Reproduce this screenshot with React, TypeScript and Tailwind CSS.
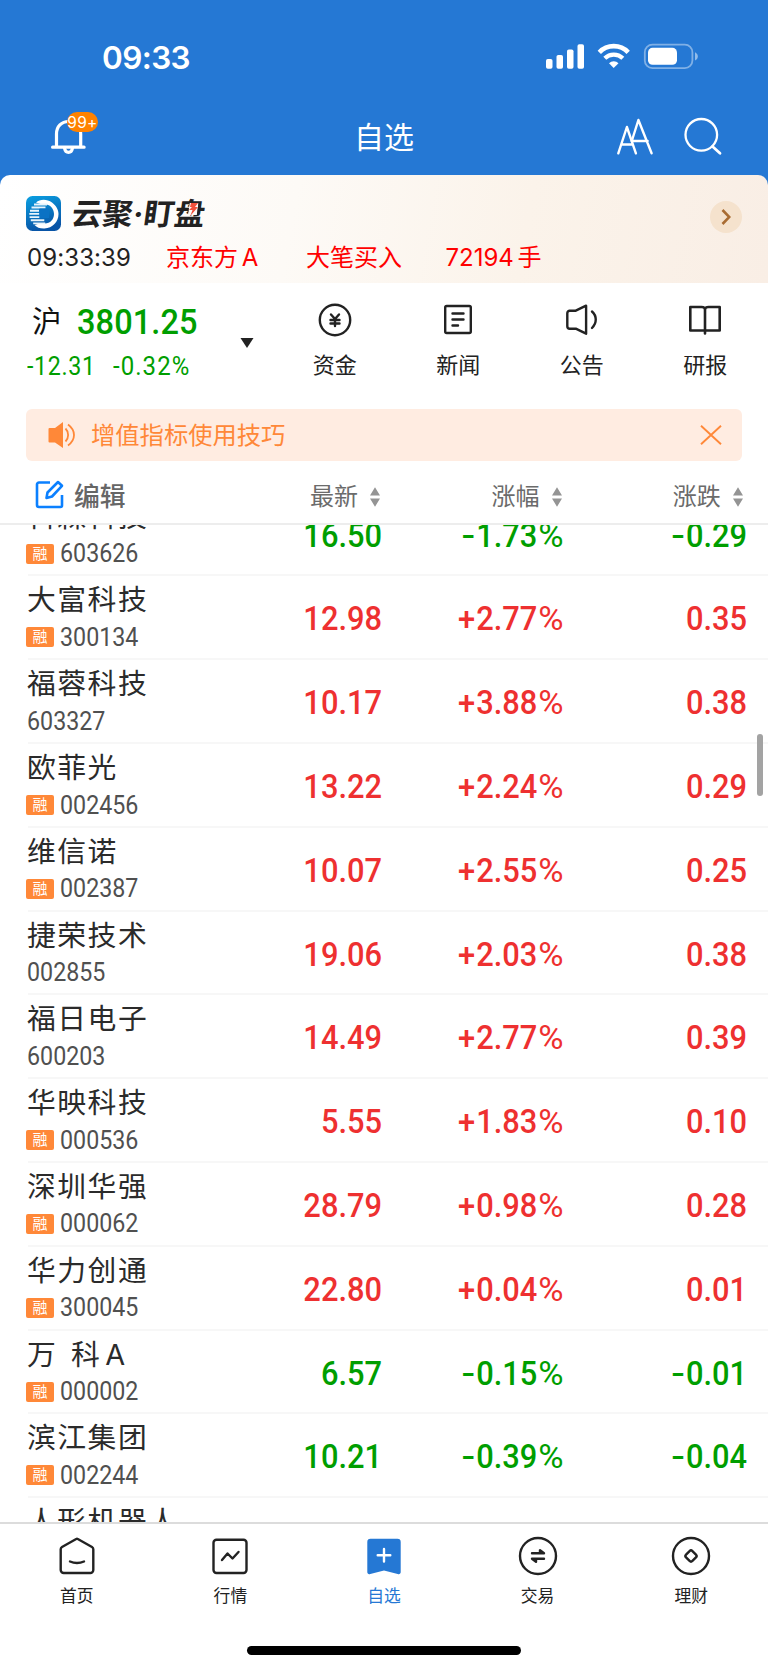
import React from 'react';

const CJK = "font-['Inter','Noto_Sans_CJK_SC',sans-serif]";
const NUM = "font-['Roboto','Noto_Sans_CJK_SC',sans-serif]";

type Stock = {
  name: string;
  code: string;
  margin: boolean;
  price: string;
  pct: string;
  change: string;
};

const stocks: Stock[] = [
  { name: '科森科技', code: '603626', margin: true, price: '16.50', pct: '-1.73%', change: '-0.29' },
  { name: '大富科技', code: '300134', margin: true, price: '12.98', pct: '+2.77%', change: '0.35' },
  { name: '福蓉科技', code: '603327', margin: false, price: '10.17', pct: '+3.88%', change: '0.38' },
  { name: '欧菲光', code: '002456', margin: true, price: '13.22', pct: '+2.24%', change: '0.29' },
  { name: '维信诺', code: '002387', margin: true, price: '10.07', pct: '+2.55%', change: '0.25' },
  { name: '捷荣技术', code: '002855', margin: false, price: '19.06', pct: '+2.03%', change: '0.38' },
  { name: '福日电子', code: '600203', margin: false, price: '14.49', pct: '+2.77%', change: '0.39' },
  { name: '华映科技', code: '000536', margin: true, price: '5.55', pct: '+1.83%', change: '0.10' },
  { name: '深圳华强', code: '000062', margin: true, price: '28.79', pct: '+0.98%', change: '0.28' },
  { name: '华力创通', code: '300045', margin: true, price: '22.80', pct: '+0.04%', change: '0.01' },
  { name: '万 科\u200aA', code: '000002', margin: true, price: '6.57', pct: '-0.15%', change: '-0.01' },
  { name: '滨江集团', code: '002244', margin: true, price: '10.21', pct: '-0.39%', change: '-0.04' },
  { name: '人形机器人', code: '', margin: false, price: '', pct: '', change: '' },
];

function StatusBar() {
  return (
    <div className="flex h-[100px] items-start justify-between pl-[102px] pr-[70px] pt-[39px]">
      <div className="text-[31.500px] font-[580] leading-[38px] tracking-[-0.600px]">09:33</div>
      <svg className="mt-[3px]" width="154" height="30" viewBox="543 42 154 30" fill="#fff">
        <rect x="545" y="59" width="6.5" height="9.7" rx="1.8" />
        <rect x="555.5" y="55" width="6.5" height="13.7" rx="1.8" />
        <rect x="566" y="49.5" width="6.5" height="19.2" rx="1.8" />
        <rect x="576.5" y="44.3" width="6.5" height="24.4" rx="1.8" />
        <path d="M598.3 52.3a20 20 0 0 1 28.9 0" fill="none" stroke="#fff" strokeWidth="4.6" />
        <path d="M603.8 58.3a12.800 12.800 0 0 1 18 0" fill="none" stroke="#fff" strokeWidth="4.2" />
        <path d="M608 63.2a6.9 6.9 0 0 1 9.5 0l-4.8 4.9z" />
        <rect x="643.8" y="44.6" width="47.6" height="23.6" rx="7.6" fill="none" stroke="#fff" strokeOpacity=".42" strokeWidth="1.8" />
        <rect x="647" y="47.8" width="29" height="17" rx="4.6" />
        <path d="M694 52.3c1.700.8 2.8 2.300 2.8 4.100s-1.100 3.300-2.800 4.100z" fillOpacity=".5" />
      </svg>
    </div>
  );
}

function NavBar() {
  return (
    <div className="grid h-[75px] grid-cols-3 pt-[11px]">
      <div className="pl-[49px]">
        <div className="relative h-[46px] w-[52px]">
          <svg width="52" height="46" viewBox="49 111 52 46" fill="none" stroke="#fff" strokeWidth="3.200" strokeLinecap="round">
            <path d="M52.600 147.200h31.500M56.500 147v-13c0-7.500 5-12.500 12.100-12.500S80.700 126.500 80.700 134v13" />
            <path d="M64.600 148.500c.5 2.500 2 3.900 3.900 3.900s3.400-1.400 3.900-3.900" />
          </svg>
          <div className="absolute left-[18px] top-[1px] flex h-[20px] w-[31px] items-center justify-center rounded-full bg-[#ff8200] pt-[2px] text-[15.500px] tracking-[0.300px]">
            99+
          </div>
        </div>
      </div>
      <div className="pt-[4px] text-center text-[30px] leading-[44px]">自选</div>
      <div className="flex justify-end pr-[44px]">
        <svg width="110" height="46" viewBox="614 111 110 46" fill="none" stroke="#fff" strokeWidth="2.400" strokeLinecap="round" strokeLinejoin="round">
          <path d="M618.300 153.300l8.600-26.300 9 26.300M622 144.500h10.500" />
          <path d="M631.800 141l6.600-21 13.200 33.300M631.800 141h15.800" />
          <circle cx="701.300" cy="134.800" r="15.800" strokeWidth="2.300" />
          <path d="M712.500 146.500l7.500 6.800" strokeWidth="2.800" />
        </svg>
      </div>
    </div>
  );
}

function Promo() {
  return (
    <div className="flex h-[108px] flex-col rounded-t-[10px] bg-[linear-gradient(100deg,#ffffff_0%,#fdfaf6_38%,#fbf3ea_68%,#f9eee5_100%)] pl-[26px] pr-[26px] pt-[20px]">
      <div className="flex h-[36px] items-center">
        <svg width="35" height="35" viewBox="0 0 35 35">
          <defs>
            <linearGradient id="lg" x1="0" y1="0" x2=".3" y2="1">
              <stop offset="0" stopColor="#0aa0e2" />
              <stop offset="1" stopColor="#0854a6" />
            </linearGradient>
          </defs>
          <rect width="35" height="35" rx="6.500" fill="url(#lg)" />
          <path d="M10 6.500C14 2.800 21 2.800 26 6.500c4 3 6.500 7 6.500 11.500 0 8-6 14-14 14.500-4.500.2-7.500-1-10-3.500l5-1.500h5.500c5 0 9-4 9-9.500 0-6.500-5.500-11-12-9.500z" fill="#fff" />
          <path d="M8 8.500h13M5.500 11.500h14M4 14.700h9M3.300 17.900h10M3.600 21.100h10M4.800 24.300h13.500M7.200 27.400h12" stroke="#e8f4fb" strokeWidth="1.900" />
          <path d="M13.500 12.500h9.500v9.500h-9.500z" fill="#0b72c4" />
        </svg>
        <div className="relative ml-[11px] mt-[1px] flex skew-x-[-8deg] text-[30.500px] font-bold leading-[36px] text-[#222]">
          <span>云聚</span>
          <span className="w-[11px] text-center">·</span>
          <span>盯盘</span>
          <svg className="absolute left-[116px] top-[6px]" width="9" height="15" viewBox="0 0 9 15">
            <rect width="9" height="12" y="1" fill="#fdfaf6" />
            <path d="M1.500 1h7l-2.500 4h3L2.500 14l1.500-6H.5l2.500-3H1z" fill="#f2513c" />
          </svg>
        </div>
        <div className="ml-auto mt-[8px] flex h-[32px] w-[32px] items-center justify-center rounded-full bg-[#f5e2cd]">
          <svg width="10" height="16" viewBox="0 0 10 16" fill="none" stroke="#a96c32" strokeWidth="2.600">
            <path d="M1.500 1l6.800 7-6.800 7" />
          </svg>
        </div>
      </div>
      <div className="mt-[10px] flex text-[24px] leading-[34px] text-[#f00]">
        <span className="w-[140px] pl-[1px] tracking-[0.100px] text-[#222]">09:33:39</span>
        <span className="w-[140px] [word-spacing:-3px]">京东方 A</span>
        <span className="w-[139.500px]">大笔买入</span>
        <span className="[word-spacing:-3px]">72194 手</span>
      </div>
    </div>
  );
}

const shortcuts = [
  {
    label: '资金',
    icon: (
      <>
        <circle cx="18" cy="18" r="15.200" />
        <path d="M14 12.500l4 4.500 4-4.500M13.500 18h9M13.500 21.500h9M18 17v7" strokeWidth="2.400" />
      </>
    ),
  },
  {
    label: '新闻',
    icon: (
      <>
        <rect x="5.200" y="4" width="25.600" height="27" rx="1.500" />
        <path d="M12.500 11.500h11M12.500 17.500h11M12.500 23.500h5.500" strokeWidth="2.400" />
      </>
    ),
  },
  {
    label: '公告',
    icon: (
      <>
        <path d="M5 9h6.500l10.300-5v28l-10.300-5H5.500a2.500 2.500 0 0 1-2.500-2.500v-13A2.500 2.500 0 0 1 5.500 9z" transform="translate(.3 -.3)" />
        <path d="M28 9.500c5 4.500 5 11.500 0 16.500" />
      </>
    ),
  },
  {
    label: '研报',
    icon: (
      <>
        <path d="M3.300 5h11.200c2 0 3.500 1 3.500 2.500C18 6 19.500 5 21.500 5h11.200v23.500H3.300zM18 7v24.500" strokeWidth="2.600" />
      </>
    ),
  },
];

function IndexRow() {
  return (
    <div className="flex h-[126px] pl-[27px]">
      <div className="flex w-[213px] flex-col pt-[17px]">
        <div className="flex h-[44px] items-center pl-[5px]">
          <span className="mt-[-2px] w-[45px] text-[29.500px] leading-[44px] text-[#111]">沪</span>
          <span className={`${NUM} mt-[1px] origin-left scale-x-[0.93] text-[35px] font-medium leading-[44px] tracking-[0.100px] text-[#009e00]`}>3801.25</span>
        </div>
        <div className={`${NUM} flex h-[30px] pt-[7px] text-[25px] leading-[32px] text-[#009e00]`}>
          <span className="w-[86px] origin-left scale-x-[0.93] tracking-[0.700px]">-12.31</span>
          <span className="origin-left scale-x-[0.960] tracking-[1.100px]">-0.32%</span>
        </div>
      </div>
      <svg className="mt-[54px]" width="14" height="12" viewBox="0 0 14 12">
        <path d="M.5 1h13L7 11z" fill="#222" />
      </svg>
      <div className="ml-[19px] flex">
        {shortcuts.map((s) => (
          <div key={s.label} className="flex w-[123.500px] flex-col items-center pt-[19px]">
            <svg width="36" height="36" viewBox="0 0 36 36" fill="none" stroke="#222" strokeWidth="2.400" strokeLinejoin="round" strokeLinecap="round">
              {s.icon}
            </svg>
            <span className="mt-[11px] text-[22px] leading-[32px] text-[#222]">{s.label}</span>
          </div>
        ))}
      </div>
    </div>
  );
}

function Notice() {
  return (
    <div className="mx-[26px] flex h-[52px] items-center rounded-[6px] bg-[#ffece1] pl-[22px] pr-[20px] text-[#ff8838]">
      <svg width="28" height="28" viewBox="0 0 28 28" fill="currentColor">
        <path d="M1.500 7H7l8-6v26l-8-5.500H1.500A1 1 0 0 1 .5 20.500v-12.500a1 1 0 0 1 1-1z" />
        <path d="M17.500 7.500c3.500 3.500 3.500 9.500 0 13M20 3.500c8 6 8 15 0 21" fill="none" stroke="currentColor" strokeWidth="1.800" />
      </svg>
      <span className="ml-[15px] text-[24.300px] leading-[36px]">增值指标使用技巧</span>
      <svg className="ml-auto" width="22" height="20" viewBox="0 0 22 20" fill="none" stroke="currentColor" strokeWidth="1.900">
        <path d="M1 .8l20 18.400M21 .8L1 19.200" />
      </svg>
    </div>
  );
}

function SortLabel({ label, cls }: { label: string; cls: string }) {
  return (
    <div className={`flex items-center ${cls}`}>
      <span className="text-[24px] leading-[36px] text-[#6b6b6b]">{label}</span>
      <svg className="ml-[12px] mt-[1px]" width="10" height="20" viewBox="0 0 10 20" fill="#949494">
        <path d="M0 8.500L5 .3l5 8.200zM0 11.500h10L5 19.700z" />
      </svg>
    </div>
  );
}

function TableHeader() {
  return (
    <div className="flex h-[64px] items-center border-b-2 border-[#ededed] pl-[35px] pt-[9px]">
      <svg className="mb-[5px]" width="29" height="29" viewBox="0 0 29 29" fill="none" stroke="#0b80ff" strokeWidth="2.600" strokeLinejoin="round">
        <path d="M15 2.500H4a2 2 0 0 0-2 2V25a2 2 0 0 0 2 2h21.500a1.500 1.500 0 0 0 1.500-1.500V15" />
        <path d="M11.500 18l1-5.500L23 2l4 3.800L17 16.500z" />
      </svg>
      <span className="ml-[10px] w-[236px] text-[25.800px] font-medium leading-[36px] text-[#666]">编辑</span>
      <SortLabel label="最新" cls="w-[181.500px]" />
      <SortLabel label="涨幅" cls="w-[181.300px]" />
      <SortLabel label="涨跌" cls="" />
    </div>
  );
}

function Figure({ value, cls }: { value: string; cls: string }) {
  const sign = value.startsWith('-') || value.startsWith('+') ? value[0] : '';
  const percent = value.endsWith('%');
  const digits = value.slice(sign.length, percent ? -1 : undefined);
  return (
    <span className={`flex origin-right scale-x-[0.92] justify-end text-[33.500px] font-medium leading-[40px] ${cls}`}>
      {sign === '-' && <span className="mr-[1px] origin-right scale-x-[1.300]">-</span>}
      {sign === '+' && <span className="mr-[1px]">+</span>}
      <span>{digits}</span>
      {percent && <span className="ml-[4.500px] origin-right scale-x-[1.120] font-normal">%</span>}
    </span>
  );
}

function Row({ s }: { s: Stock }) {
  const color = s.pct.startsWith('-') ? 'text-[#009e00]' : 'text-[#ee3030]';
  return (
    <div className="ml-[28px] flex h-[83.800px] shrink-0 border-b-2 border-[#f7f7f7]">
      <div className="ml-[-1px] flex w-[201px] flex-col pt-[3px]">
        <span className="whitespace-pre text-[28.800px] leading-[42px] tracking-[1.500px] text-[#2b2b2b] [word-spacing:4px]">{s.name}</span>
        <div className="flex h-[32px] items-center">
          {s.margin && (
            <span className="ml-[-1px] mr-[6px] flex h-[20px] w-[28px] items-center justify-center rounded-[2px] bg-[#ff8838] text-[15px] leading-[20px] text-white">
              融
            </span>
          )}
          <span className={`${NUM} mt-[1px] origin-left scale-x-[0.930] text-[25px] leading-[32px] text-[#505050]`}>{s.code}</span>
        </div>
      </div>
      <div className={`${NUM} ${color} flex pt-[23px]`}>
        <Figure value={s.price} cls="w-[154px]" />
        <Figure value={s.pct} cls="w-[182px]" />
        <Figure value={s.change} cls="w-[183px]" />
      </div>
    </div>
  );
}

const tabs = [
  {
    label: '首页',
    icon: (
      <>
        <path d="M5 11L19.200 3c.6-.3 1-.3 1.600 0L35 11c1 .6 1.300 1.200 1.300 2.300V34a3 3 0 0 1-3 3H6.700a3 3 0 0 1-3-3V13.300c0-1.100.3-1.700 1.300-2.300z" />
        <path d="M13 25.500c4.500 2 9.500 2 14 0" />
      </>
    ),
  },
  {
    label: '行情',
    icon: (
      <>
        <rect x="3.500" y="3.800" width="33" height="33.200" rx="3" />
        <path d="M12 24l5.500-6.500 5 5 6-6.500" />
      </>
    ),
  },
  {
    label: '自选',
    icon: (
      <>
        <path d="M6.500 2.700h27a3.200 3.200 0 0 1 3.200 3.200v30c0 1.700-1.300 2.700-3 2L20 34.500 6.300 37.900c-1.700.7-3-.3-3-2v-30a3.200 3.200 0 0 1 3.200-3.200z" fill="#2578d4" stroke="none" />
        <path d="M20 13v12.500M13.700 19.200h12.600" stroke="#fff" />
      </>
    ),
  },
  {
    label: '交易',
    icon: (
      <>
        <circle cx="20" cy="20" r="18" />
        <path d="M14 17.300h12l-4-3v2.500M26 22.800H14l4 3v-2.500" />
      </>
    ),
  },
  {
    label: '理财',
    icon: (
      <>
        <circle cx="20" cy="20" r="18" />
        <rect x="15.500" y="15.500" width="9" height="9" rx="2" transform="rotate(45 20 20)" />
      </>
    ),
  },
];

function TabBar() {
  return (
    <div className="flex h-[147px] flex-col items-center border-t-2 border-[#dcdcdc] bg-white">
      <div className="grid h-[122px] w-full grid-cols-5">
        {tabs.map((t) => (
          <div key={t.label} className={`flex flex-col items-center pt-[12px] ${t.label === '自选' ? 'text-[#2578d4]' : 'text-[#222]'}`}>
            <svg width="40" height="40" viewBox="0 0 40 40" fill="none" stroke="currentColor" strokeWidth="2.400" strokeLinecap="round" strokeLinejoin="round">
              {t.icon}
            </svg>
            <span className="mt-[8px] text-[16.800px] leading-[24px]">{t.label}</span>
          </div>
        ))}
      </div>
      <div className="h-[9px] w-[274px] rounded-full bg-black" />
    </div>
  );
}

export default function App() {
  return (
    <div className={`${CJK} relative flex h-[1669px] w-[768px] flex-col overflow-hidden bg-white`}>
      <header className="h-[175px] shrink-0 bg-[#2578d4] text-white">
        <StatusBar />
        <NavBar />
      </header>
      <div className="shrink-0 bg-[#2578d4]">
        <Promo />
      </div>
      <IndexRow />
      <Notice />
      <TableHeader />
      <div className="relative flex h-[997px] shrink-0 flex-col overflow-hidden">
        <div className="mt-[-32.400px] flex flex-col">
          {stocks.map((s) => (
            <Row key={s.name} s={s} />
          ))}
        </div>
        <div className="absolute right-[5px] top-[209px] h-[62px] w-[6px] rounded-full bg-[#a3a3a3]" />
      </div>
      <TabBar />
    </div>
  );
}
